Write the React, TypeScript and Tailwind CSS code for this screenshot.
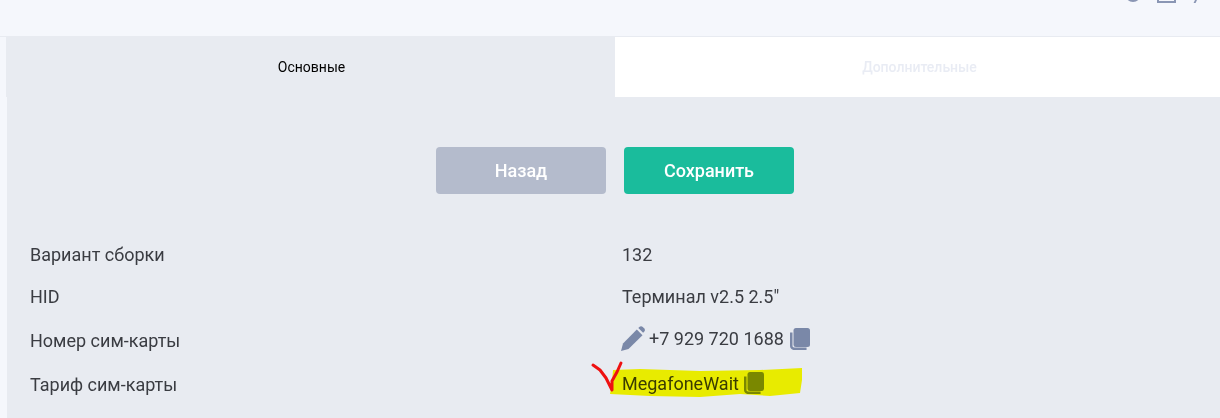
function CopyIcon({ className }: { className: string }) {
  return (
    <svg viewBox="0 0 20 22" className={className} aria-hidden="true">
      <path d="M1.250 4.500v13.500a2.800 2.800 0 0 0 2.800 2.800h12.500" fill="none" stroke="currentColor" strokeWidth="2.500" />
      <rect x="3.500" y="0" width="16.500" height="19" rx="2.500" fill="currentColor" />
    </svg>
  );
}

function PencilIcon() {
  return (
    <svg viewBox="0 0 24 25" className="h-[25px] w-[24px] text-[#7a88a8]" aria-hidden="true">
      <path d="M0 25l2-7.500L15.800 3.500l5.700 5.700L7.500 23z" fill="currentColor" />
      <path d="M17.300 2l1-1a2.500 2.500 0 0 1 3.500 0l1.300 1.300a2.500 2.500 0 0 1 0 3.500l-1 1z" fill="currentColor" />
    </svg>
  );
}

export default function App() {
  return (
    <div className="relative h-[418px] w-[1220px] overflow-hidden bg-[#f5f7fc] font-['Roboto',sans-serif]">
      {/* header, cut off by the top edge */}
      <header className="flex h-[37px] justify-end overflow-hidden border-b border-[#e8ebf1] pr-[20px] text-[#8a96b4]">
        <div className="-mt-[17px] h-[19px] w-[16px] rounded-full border-2 border-current" />
        <div className="-mt-[16px] ml-[16px] h-[19px] w-[19px] border-2 border-current" />
        <div className="-mt-[16px] ml-[21px] h-[19px] w-[3px] skew-x-[-25deg] border-r-2 border-current" />
      </header>

      <div className="ml-[6px] flex h-[60px]">
        <div className="flex w-[609px] items-center justify-center bg-[#e8ebf1] pl-[2px] text-[14px] text-black">Основные</div>
        <div className="flex flex-1 items-center justify-center bg-white pl-[4px] text-[14px] font-medium text-[#e9ecf4]">Дополнительные</div>
      </div>

      <main className="ml-[7px] h-[321px] bg-[#e8ebf1] text-[18px] text-[#3a3c42]">
        <div className="flex justify-center gap-[18px] pt-[50px] pl-[3px]">
          <button className="h-[47px] w-[170px] rounded-[4px] bg-[#b4bbcc] text-[18px] font-medium text-white">Назад</button>
          <button className="h-[47px] w-[170px] rounded-[4px] bg-[#1abc9c] text-[18px] font-medium text-white">Сохранить</button>
        </div>

        <div className="mt-[39px] grid grid-cols-[592px_1fr] pl-[23px]">
          <div className="flex h-[42px] items-center">Вариант сборки</div>
          <div className="flex h-[42px] items-center">132</div>
          <div className="flex h-[43px] items-center">HID</div>
          <div className="flex h-[43px] items-center">Терминал v2.5 2.5"</div>
          <div className="flex h-[44px] items-center">Номер сим-карты</div>
          <div className="-ml-[1px] flex h-[44px] -translate-y-[2px] items-center gap-[4px]">
            <PencilIcon />
            <span>+7 929 720 1688</span>
            <CopyIcon className="mt-[2px] ml-[2px] h-[22px] w-[20px] text-[#7a88a8]" />
          </div>
          <div className="flex h-[44px] items-center">Тариф сим-карты</div>
          <div className="flex h-[44px] -translate-y-[1px] items-center gap-[5px]">
            <span>MegafoneWait</span>
            <CopyIcon className="h-[22px] w-[20px] text-[#7a88a8]" />
          </div>
        </div>
      </main>

      {/* hand-drawn marker and tick on top of the screenshot */}
      <svg viewBox="0 0 1220 418" className="pointer-events-none absolute top-0 left-0 h-[418px] w-[1220px] mix-blend-multiply" aria-hidden="true">
        <path d="M613 370L640 369L700 371L760 370L802 368L802 380L800 393L770 396L740 394L700 397L650 396L610 394L612 382Z" fill="#ffff00" />
      </svg>
      <svg viewBox="0 0 1220 418" className="pointer-events-none absolute top-0 left-0 h-[418px] w-[1220px]" aria-hidden="true">
        <path d="M593 365L600 370L606 378L612 390L612 381L617 372L621 363" fill="none" stroke="#ee1111" strokeWidth="3" strokeLinecap="round" strokeLinejoin="round" />
      </svg>
    </div>
  );
}
